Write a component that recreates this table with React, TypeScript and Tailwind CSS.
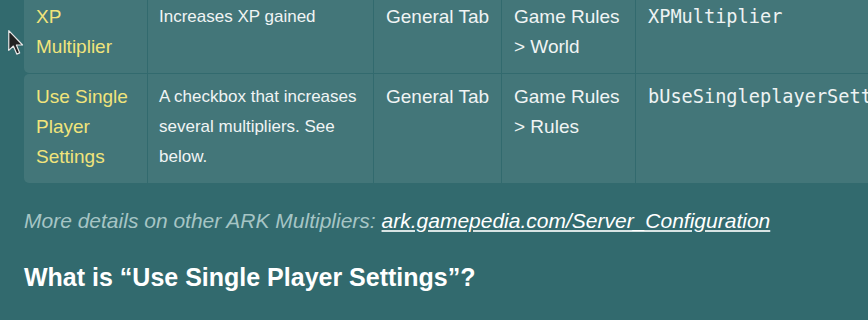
import React from "react";

const sans = { fontFamily: '"Liberation Sans", Arial, sans-serif' };
const mono = { fontFamily: '"DejaVu Sans Mono", monospace' };

function Row({ name, desc, tab, loc, key2 }: { name: string[]; desc: string[]; tab: string; loc: string[]; key2: string }) {
  const cell = "bg-[#437679] pl-3 pr-2 pt-2 pb-[11px]";
  return (
    <div className="grid grid-cols-[123px_225px_127px_133px_1fr] gap-x-px rounded-[5px] overflow-hidden">
      <div className={cell + " text-[19px] leading-[30px] text-[#f1e47b]"}>
        {name.map((n) => (
          <div key={n}>{n}</div>
        ))}
      </div>
      <div className={"bg-[#437679] pl-[11px] pr-2 pt-2 pb-[11px] text-[17px] leading-[30px] text-[#f0f4f4]"}>
        {desc.map((n) => (
          <div key={n}>{n}</div>
        ))}
      </div>
      <div className={cell + " text-[19px] leading-[30px] text-[#f0f4f4]"}>{tab}</div>
      <div className={cell + " text-[19px] leading-[30px] text-[#f0f4f4]"}>
        {loc.map((n) => (
          <div key={n}>{n}</div>
        ))}
      </div>
      <div className={cell + " text-[18.6px] leading-[30px] text-[#eef3f3] whitespace-nowrap"} style={mono}>
        {key2}
      </div>
    </div>
  );
}

export default function App() {
  return (
    <div className="relative w-[868px] h-[320px] overflow-hidden bg-[#326a6e]" style={sans}>
      <div className="pl-6 mt-[-6.5px] w-[1100px] flex flex-col gap-y-px">
        <Row
          name={["XP", "Multiplier"]}
          desc={["Increases XP gained"]}
          tab="General Tab"
          loc={["Game Rules", "> World"]}
          key2="XPMultiplier"
        />
        <Row
          name={["Use Single", "Player", "Settings"]}
          desc={["A checkbox that increases", "several multipliers. See", "below."]}
          tab="General Tab"
          loc={["Game Rules", "> Rules"]}
          key2="bUseSingleplayerSettings"
        />
      </div>
      <p className="pl-6 mt-[23px] text-[21px] leading-[30px] italic text-[#a6c5c5] whitespace-nowrap">
        More details on other ARK Multipliers:{" "}
        <a className="text-white underline decoration-[#d8e4e4]" href="#">
          ark.gamepedia.com/Server_Configuration
        </a>
      </p>
      <h2 className="pl-6 mt-[25px] text-[25px] leading-[32px] font-bold text-white whitespace-nowrap">
        What is “Use Single Player Settings”?
      </h2>
      <svg className="absolute left-[8px] top-[30px]" width="16" height="25" viewBox="0 0 12 19">
        <path d="M0.5 0.5 L0.5 15.5 L4 12.2 L6.6 18.3 L8.8 17.4 L6.3 11.4 L11 11.4 Z" fill="#222" stroke="#e8e8e8" strokeWidth="0.9" strokeLinejoin="round" />
      </svg>
    </div>
  );
}
